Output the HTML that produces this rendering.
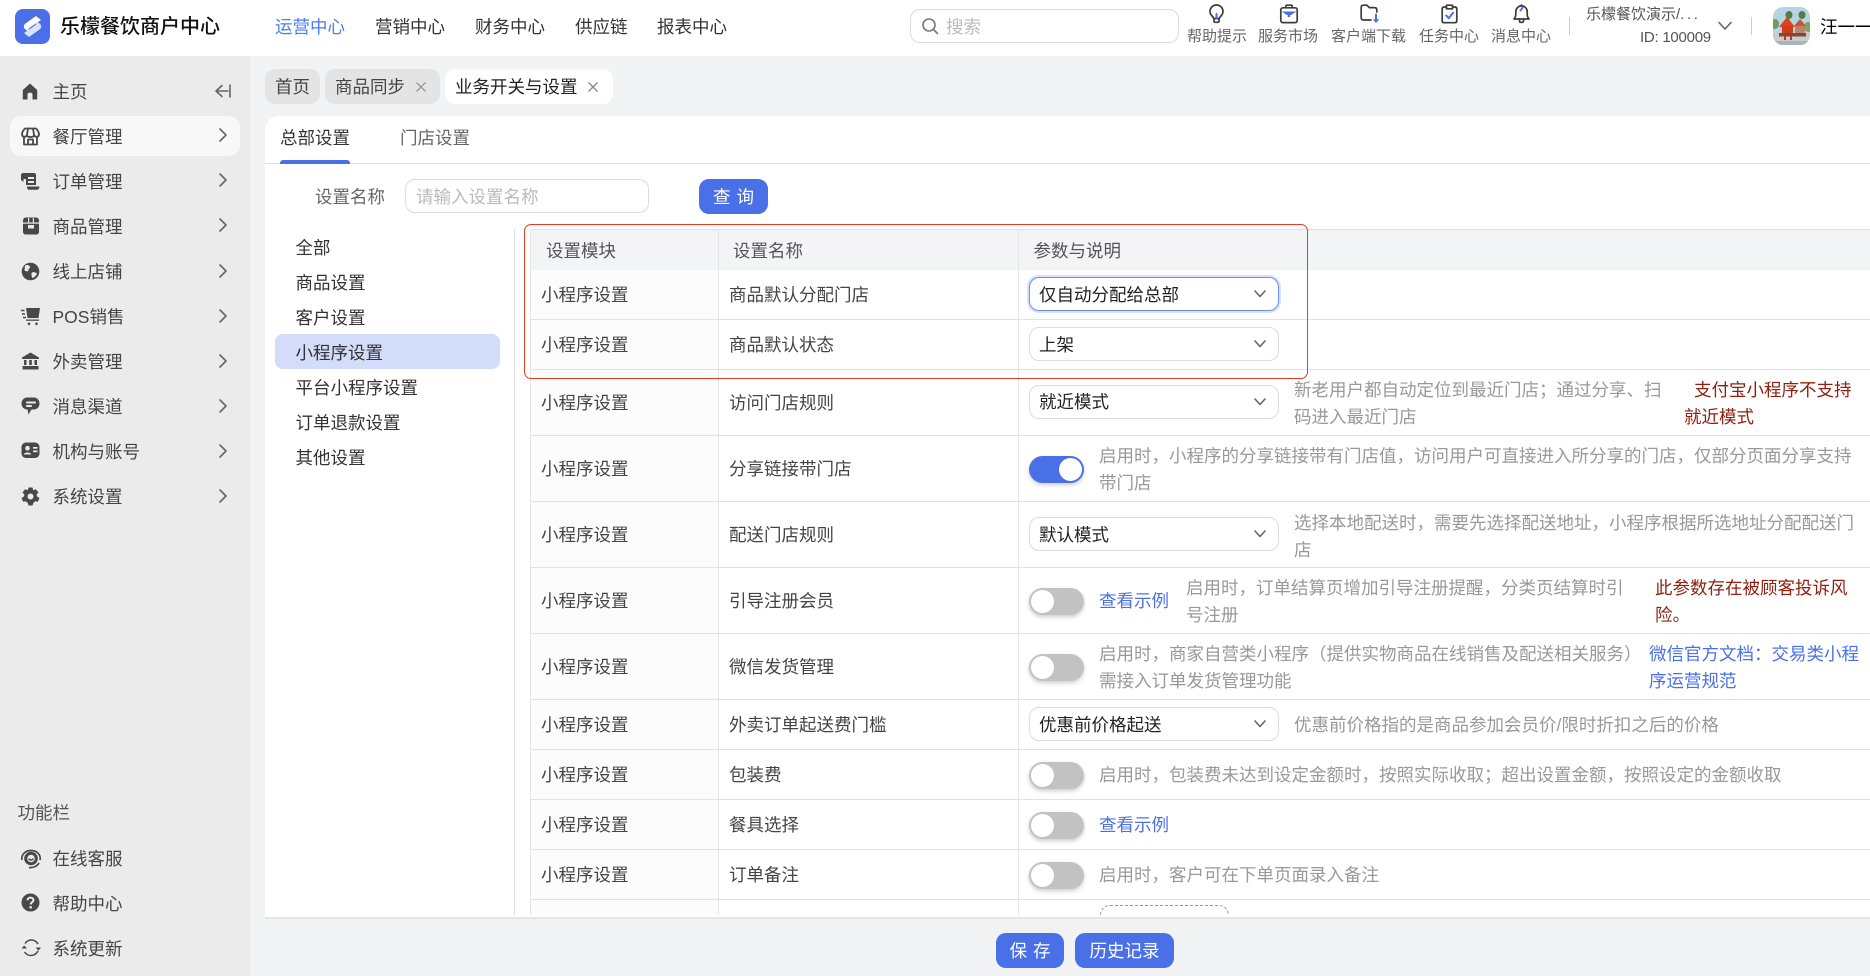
<!DOCTYPE html>
<html lang="zh-CN">
<head>
<meta charset="utf-8">
<title>业务开关与设置</title>
<style>
*{box-sizing:border-box;margin:0;padding:0}
html,body{width:1870px;height:976px;overflow:hidden;background:#f2f3f5}
body{position:relative;font-family:"Liberation Sans","Noto Sans CJK SC",sans-serif;font-size:17.5px;color:#333}
.a{position:absolute}
.t{position:absolute;white-space:nowrap;line-height:26px;height:26px}
svg{position:absolute;display:block}
.c1{color:#444}
.g{color:#999}
.r{color:#8f1f0e}
.b{color:#4a70e8}
.s{position:absolute;left:1029px;width:250px;height:34px;background:#fff;border:1px solid #dcdcdc;border-radius:10px;color:#222;line-height:34px;padding-left:9px;white-space:nowrap}
.s svg{right:11px;top:10px}
.sw{position:absolute;left:1029px;width:55px;height:27px;border-radius:14px;background:#c2c2c2;box-shadow:0 2px 4px rgba(0,0,0,.2)}
.sw i{position:absolute;left:2px;top:2px;width:23px;height:23px;border-radius:50%;background:#fff}
.sw.on{background:#4a70e8}
.sw.on i{left:30px}
.hl{position:absolute;left:530px;width:1340px;height:1px;background:#e2e2e2}
.nav{font-size:17.5px;color:#333}
.ic{font-size:15px;color:#666}
.menu{color:#444}
.ch{fill:none;stroke:#666;stroke-width:1.6;stroke-linecap:round;stroke-linejoin:round}
.top{fill:none;stroke:#3c3c3c;stroke-width:1.7;stroke-linecap:round;stroke-linejoin:round}
.acc{fill:none;stroke:#4a70e8;stroke-width:2;stroke-linecap:round;stroke-linejoin:round}
.sb{fill:#484848}
.tab{position:absolute;top:69px;height:35px;border-radius:10px;line-height:36px;background:#e4e4e4;color:#444;white-space:nowrap}
.btn{position:absolute;background:#4a70e8;color:#fff;border-radius:10px;text-align:center;white-space:nowrap}
</style>
</head>
<body>
<!-- top bar -->
<div class="a" style="left:0;top:0;width:1870px;height:56px;background:#fff"></div>
<svg style="left:15px;top:9px" width="35" height="35" viewBox="0 0 35 35">
<rect width="35" height="35" rx="8" fill="#4a6fe8"/>
<path d="M21 7 L26 11 L15 18.500 C13 20 13 21.500 14 23 L10.500 20.500 C8 18.500 8.500 16 10.500 14.500Z" fill="#fff"/>
<path d="M14 28 L9 24 L20 16.500 C22 15 22 13.500 21 12 L24.500 14.500 C27 16.500 26.500 19 24.500 20.500Z" fill="#dbe3fb"/>
</svg>
<div class="t" style="left:60px;top:14px;font-size:20px;font-weight:500;color:#111">乐檬餐饮商户中心</div>
<div class="t nav" style="left:275px;top:14px;color:#4a7df0">运营中心</div>
<div class="t nav" style="left:375px;top:14px">营销中心</div>
<div class="t nav" style="left:475px;top:14px">财务中心</div>
<div class="t nav" style="left:575px;top:14px">供应链</div>
<div class="t nav" style="left:657px;top:14px">报表中心</div>

<div class="a" style="left:910px;top:9px;width:269px;height:34px;border:1px solid #dcdcdc;border-radius:10px;background:#fff"></div>
<svg style="left:921px;top:17px" width="18" height="18" viewBox="0 0 18 18"><circle cx="8" cy="8" r="6" fill="none" stroke="#777" stroke-width="1.6"/><path d="M12.5 12.5L16.5 16.5" stroke="#777" stroke-width="1.6" stroke-linecap="round"/></svg>
<div class="t" style="left:946px;top:14px;color:#bbb">搜索</div>

<!-- top icons -->
<svg style="left:1207px;top:4px" width="19" height="20" viewBox="0 0 19 20"><path class="top" d="M6.7 14.5C6.6 12.6 3 11.5 3 7.5A6.5 6.5 0 0 1 16 7.5C16 11.5 12.4 12.6 12.3 14.5ZM7 14.5V17.5C7 18.6 12 18.6 12 17.5V14.5"/><path class="acc" d="M9.5 10V14" stroke-width="1.4"/></svg>
<svg style="left:1279px;top:4px" width="20" height="20" viewBox="0 0 20 20"><path class="top" d="M6.8 3.6V2.2C6.8 1.6 7.2 1.2 7.8 1.2H12.2C12.8 1.2 13.2 1.6 13.2 2.2V3.6M4 3.8H16C17.4 3.8 18.2 4.6 18.2 6V16C18.2 17.6 17.4 18.6 16 18.6H4C2.6 18.6 1.8 17.6 1.8 16V6C1.8 4.6 2.6 3.8 4 3.8Z"/><path d="M2.5 7.5H17.5L12 11H11.2V13H8.8V11H8Z" fill="#4a70e8"/></svg>
<svg style="left:1360px;top:4px" width="21" height="20" viewBox="0 0 21 20"><path class="top" d="M11 16H3.5C2 16 1.2 15.2 1.2 13.7V3.5C1.2 2 2 1.2 3.5 1.2H7L9.2 3.6H14.5C16 3.6 16.8 4.4 16.8 5.9V8"/><path class="acc" d="M16 10.5V17" stroke-width="2"/><path d="M12.8 15.3H19.2L16 19Z" fill="#4a70e8"/></svg>
<svg style="left:1441px;top:4px" width="17" height="20" viewBox="0 0 17 20"><path class="top" d="M5 3H3.2C2 3 1.2 3.8 1.2 5V16.6C1.2 17.9 2 18.7 3.2 18.7H13.8C15 18.7 15.8 17.9 15.8 16.6V5C15.8 3.8 15 3 13.8 3H12M5.5 1.2H11.5V4.8H5.5Z"/><path class="acc" d="M5.2 11.5L7.8 14.2L12 8.8"/></svg>
<svg style="left:1512px;top:4px" width="19" height="20" viewBox="0 0 19 20"><path class="top" d="M2 15C3.4 13.6 3.8 12 3.8 10V7.6A5.7 5.7 0 0 1 15.2 7.6V10C15.2 12 15.6 13.6 17 15Z"/><path class="top" d="M7.5 15.5V17.2C7.5 18.8 11.5 18.8 11.5 17.2V15.5M9.5 1V2"/><path class="acc" d="M8.5 6.5L10.5 3.8" stroke-width="1.7"/></svg>

<div class="t ic" style="left:1187px;top:24px">帮助提示</div>
<div class="t ic" style="left:1258px;top:24px">服务市场</div>
<div class="t ic" style="left:1331px;top:24px">客户端下载</div>
<div class="t ic" style="left:1419px;top:24px">任务中心</div>
<div class="t ic" style="left:1491px;top:24px">消息中心</div>

<div class="a" style="left:1569px;top:17px;width:1px;height:18px;background:#ccc"></div>
<div class="t" style="left:1586px;top:2px;font-size:15px;color:#555">乐檬餐饮演示/<span style="letter-spacing:2.6px">...</span></div>
<div class="t" style="left:1640px;top:25px;font-size:15px;color:#555;letter-spacing:-.25px">ID: 100009</div>
<svg style="left:1717px;top:20px" width="16" height="12" viewBox="0 0 16 12"><path class="ch" d="M2 2.5L8 9L14 2.5"/></svg>
<div class="a" style="left:1751px;top:17px;width:1px;height:18px;background:#ccc"></div>

<svg style="left:1773px;top:7px" width="37" height="38" viewBox="0 0 37 38">
<defs><clipPath id="av"><rect width="37" height="38" rx="10"/></clipPath></defs>
<g clip-path="url(#av)">
<rect width="37" height="38" fill="#b8d4e2"/>
<ellipse cx="16" cy="8" rx="3.500" ry="4" fill="#4f7f4a"/><ellipse cx="29" cy="8" rx="3.500" ry="4" fill="#4f7f4a"/>
<ellipse cx="2" cy="17" rx="4" ry="5" fill="#6e9a5c"/><ellipse cx="35" cy="20" rx="4" ry="5" fill="#7ea36a"/>
<rect y="26" width="37" height="12" fill="#c9cdc9"/>
<path d="M6 20L14 10L22 20Z" fill="#e2401a"/>
<path d="M21 19L27 12L33 19Z" fill="#c8533a"/>
<rect x="9" y="19" width="11" height="9" fill="#d23a1a"/>
<rect x="6" y="26" width="27" height="3.500" fill="#7d4a36"/>
<rect x="22" y="19" width="10" height="7" fill="#b8876a"/>
<rect x="11" y="29" width="2" height="4" fill="#c9341a"/><rect x="17" y="29" width="2" height="4" fill="#c9341a"/>
<rect x="0" y="34" width="37" height="4" fill="#a6b5bb"/>
</g></svg>
<div style="position:absolute;left:1820px;top:14px;width:50px;height:26px;overflow:hidden;white-space:nowrap;line-height:26px;color:#000">汪一一一一</div>

<!-- sidebar -->
<div class="a" style="left:0;top:56px;width:250px;height:920px;background:#ebebeb"></div>
<div class="a" style="left:10px;top:116px;width:230px;height:40px;background:#f8f8f8;border-radius:11px"></div>

<svg style="left:20px;top:81px" width="20" height="20" viewBox="0 0 20 20"><path class="sb" d="M10 2.500L2.800 9V18.500H7.500V13.500C7.500 11 12.500 11 12.500 13.500V18.500H17.200V9Z"/></svg>
<svg style="left:21px;top:127px" width="19" height="19" viewBox="0 0 19 19"><path d="M4 1.500H15C16.500 3 18 5.500 18 7.500 18 10 14.500 10.500 13.200 8.500 12 10.500 7 10.500 5.800 8.500 4.500 10.500 1 10 1 7.500 1 5.500 2.500 3 4 1.500ZM3 10V17.500H16V10M7 17.500V12.500H12V17.500M7 2L5.800 8.500M12 2L13.200 8.500" fill="none" stroke="#484848" stroke-width="1.800" stroke-linejoin="round"/></svg>
<svg style="left:20px;top:172px" width="21" height="19" viewBox="0 0 21 19"><path class="sb" d="M3 1H14C15.500 1 16 2 16 3V13H6V7H3.500V10L1 8V3C1 2 2 1 3 1ZM8 5V7H14V5ZM8 9V11H14V9Z" fill-rule="evenodd"/><path class="sb" d="M7 14.500H19.500C19.500 16 18.500 17.800 17 17.800H9C7.500 17.800 7 16 7 14.500Z"/></svg>
<svg style="left:22px;top:217px" width="18" height="18" viewBox="0 0 18 18"><path class="sb" d="M4 0.500H14C16 0.500 17 2 17 3.500V14.500C17 16.500 16 17.500 14 17.500H4C2 17.500 1 16.500 1 14.500V3.500C1 2 2 0.500 4 0.500ZM6 8V11.500H12V8Z" fill-rule="evenodd"/><rect x="1" y="5.500" width="16" height="1.200" fill="#ebebeb"/><rect x="6" y="1" width="1.200" height="5" fill="#ebebeb"/><rect x="10.800" y="1" width="1.200" height="5" fill="#ebebeb"/></svg>
<svg style="left:21px;top:262px" width="19" height="19" viewBox="0 0 19 19"><circle cx="9.500" cy="9.500" r="8.800" fill="#484848"/><path d="M4 3.500C6 2.500 8 3 9 4.500 9.500 6 7.500 6.500 7.500 8 7.500 10 5 9.500 3.500 8.500ZM11 10.500C12.500 9.500 15 10.500 16 11.500 15 14 13 15.500 11.500 16 10.500 14.500 10 12 11 10.500Z" fill="#ebebeb"/></svg>
<svg style="left:20px;top:307px" width="21" height="19" viewBox="0 0 21 19"><path class="sb" d="M6 1H20L18.500 11H7.500Z"/><path d="M1 3.500H4.500M2 7H5M3 10.500H6" stroke="#484848" stroke-width="1.600"/><rect x="6" y="12.500" width="13" height="1.300" fill="#484848"/><circle cx="9" cy="16.800" r="1.300" fill="#484848"/><circle cx="16.500" cy="16.800" r="1.300" fill="#484848"/></svg>
<svg style="left:21px;top:352px" width="19" height="18" viewBox="0 0 19 18"><path class="sb" d="M9.500 0.500L18 5.500V7H1V5.500ZM3 8H5.500V13H3ZM8.200 8H10.800V13H8.200ZM13.500 8H16V13H13.500ZM1.500 14H17.500V17.500H1.500Z"/></svg>
<svg style="left:21px;top:397px" width="19" height="18" viewBox="0 0 19 18"><path class="sb" d="M6 0.500H13C16 0.500 18.500 3 18.500 6.500S16 12.500 13 12.500H10.500L7.500 17.500 6.500 12.500C3 12.500 0.500 10 0.500 6.500S3 0.500 6 0.500Z"/><rect x="5" y="4.500" width="10" height="2" rx="1" fill="#ebebeb"/><rect x="5" y="8" width="6" height="2" rx="1" fill="#ebebeb"/></svg>
<svg style="left:21px;top:442px" width="19" height="17" viewBox="0 0 19 17"><rect x="0.500" y="0.500" width="18" height="15.500" rx="4.500" fill="#484848"/><circle cx="6.500" cy="6.200" r="2.300" fill="#ebebeb"/><path d="M2.800 12.500C3.500 9.800 9.500 9.800 10.200 12.500Z" fill="#ebebeb"/><rect x="12" y="5" width="4.500" height="1.700" fill="#ebebeb"/><rect x="12" y="8.500" width="4.500" height="1.700" fill="#ebebeb"/></svg>
<svg style="left:21px;top:487px" width="19" height="19" viewBox="0 0 19 19"><path class="sb" d="M7.500 0.500H11.500L12.200 3.300 14.800 2.200 17.500 5.500 15.600 7.600 16 9.500 18.500 11 16.800 14.800 14.200 14.200 12.400 16 11.500 18.500H7.500L6.800 16 4.600 14.200 2.200 14.800 0.500 11 3 9.500 3.400 7.600 1.500 5.500 4.200 2.200 6.800 3.300ZM9.500 6.500A3 3 0 1 0 9.500 12.500 3 3 0 0 0 9.500 6.500Z" fill-rule="evenodd"/></svg>

<div class="t menu" style="left:52.500px;top:79px">主页</div>
<svg style="left:214px;top:83px" width="18" height="16" viewBox="0 0 18 16"><path d="M8 2.500L2 8L8 13.500M2.500 8H14M16 2V14" fill="none" stroke="#666" stroke-width="1.600" stroke-linecap="round" stroke-linejoin="round"/></svg>
<div class="t menu" style="left:52.500px;top:124px">餐厅管理</div>
<div class="t menu" style="left:52.500px;top:169px">订单管理</div>
<div class="t menu" style="left:52.500px;top:214px">商品管理</div>
<div class="t menu" style="left:52.500px;top:259px">线上店铺</div>
<div class="t menu" style="left:52.500px;top:304px">POS销售</div>
<div class="t menu" style="left:52.500px;top:349px">外卖管理</div>
<div class="t menu" style="left:52.500px;top:394px">消息渠道</div>
<div class="t menu" style="left:52.500px;top:439px">机构与账号</div>
<div class="t menu" style="left:52.500px;top:484px">系统设置</div>

<svg style="left:218px;top:127px" width="10" height="16" viewBox="0 0 10 16"><path class="ch" d="M2 2L8 8L2 14"/></svg>
<svg style="left:218px;top:172px" width="10" height="16" viewBox="0 0 10 16"><path class="ch" d="M2 2L8 8L2 14"/></svg>
<svg style="left:218px;top:217px" width="10" height="16" viewBox="0 0 10 16"><path class="ch" d="M2 2L8 8L2 14"/></svg>
<svg style="left:218px;top:263px" width="10" height="16" viewBox="0 0 10 16"><path class="ch" d="M2 2L8 8L2 14"/></svg>
<svg style="left:218px;top:308px" width="10" height="16" viewBox="0 0 10 16"><path class="ch" d="M2 2L8 8L2 14"/></svg>
<svg style="left:218px;top:353px" width="10" height="16" viewBox="0 0 10 16"><path class="ch" d="M2 2L8 8L2 14"/></svg>
<svg style="left:218px;top:398px" width="10" height="16" viewBox="0 0 10 16"><path class="ch" d="M2 2L8 8L2 14"/></svg>
<svg style="left:218px;top:443px" width="10" height="16" viewBox="0 0 10 16"><path class="ch" d="M2 2L8 8L2 14"/></svg>
<svg style="left:218px;top:488px" width="10" height="16" viewBox="0 0 10 16"><path class="ch" d="M2 2L8 8L2 14"/></svg>

<div class="t" style="left:17.500px;top:800px;color:#555">功能栏</div>
<div class="t menu" style="left:52.500px;top:846px">在线客服</div>
<div class="t menu" style="left:52.500px;top:891px">帮助中心</div>
<div class="t menu" style="left:52.500px;top:936px">系统更新</div>
<svg style="left:20px;top:848px" width="22" height="22" viewBox="0 0 22 22"><circle cx="11" cy="10.500" r="6.800" fill="#484848"/><circle cx="11" cy="10.500" r="3.800" fill="#ebebeb"/><path d="M8.800 10.500C9.500 12.500 12.500 12.500 13.200 10.500" fill="none" stroke="#484848" stroke-width="1.400"/><path d="M2 12C1 8 4 2.500 11 2.500S21 8 20 12M9 19.500C13 20 17 18.500 19 15" fill="none" stroke="#484848" stroke-width="1.700"/></svg>
<svg style="left:21px;top:893px" width="19" height="19" viewBox="0 0 19 19"><circle cx="9.500" cy="9.500" r="9" fill="#484848"/><path d="M6.500 7.200C6.500 3.800 12.500 3.800 12.500 7.200 12.500 9.200 9.700 9.200 9.700 11.500" fill="none" stroke="#ebebeb" stroke-width="2"/><circle cx="9.700" cy="14.300" r="1.300" fill="#ebebeb"/></svg>
<svg style="left:20px;top:938px" width="22" height="20" viewBox="0 0 22 20"><path d="M5 5.500C8.500 0.500 15 1 18 6M18 13C15 18.500 8 19 4.500 14" fill="none" stroke="#484848" stroke-width="1.500"/><path d="M15.800 9.500H21L18.400 12.800ZM1.500 10.500H7L4.200 7.500Z" fill="#484848"/></svg>

<!-- tabs -->
<div class="tab" style="left:265px;width:55px;padding-left:10px">首页</div>
<div class="tab" style="left:325px;width:115px;padding-left:10px">商品同步</div>
<div class="tab" style="left:445px;width:168px;padding-left:10px;background:#fff;color:#222">业务开关与设置</div>
<svg style="left:415px;top:81px" width="12" height="12" viewBox="0 0 12 12"><path d="M1.500 1.500L10.500 10.500M10.500 1.500L1.500 10.500" stroke="#999" stroke-width="1.300"/></svg>
<svg style="left:587px;top:81px" width="12" height="12" viewBox="0 0 12 12"><path d="M1.500 1.500L10.500 10.500M10.500 1.500L1.500 10.500" stroke="#888" stroke-width="1.300"/></svg>

<!-- main panel -->
<div class="a" style="left:265px;top:116px;width:1605px;height:802px;background:#fff;border-top-left-radius:14px"></div>
<div class="t" style="left:280px;top:125px;color:#333">总部设置</div>
<div class="t" style="left:400px;top:125px;color:#666">门店设置</div>
<div class="a" style="left:265px;top:163px;width:1605px;height:1px;background:#dfdfdf"></div>
<div class="a" style="left:280px;top:160px;width:70px;height:4px;background:#4a70e8;border-radius:3px 3px 0 0"></div>

<div class="t" style="left:315px;top:184px;color:#666">设置名称</div>
<div class="a" style="left:405px;top:179px;width:244px;height:34px;border:1px solid #dcdcdc;border-radius:10px;background:#fff"></div>
<div class="t" style="left:416px;top:184px;color:#bbb">请输入设置名称</div>
<div class="btn" style="left:699px;top:179px;width:69px;height:35px;line-height:36px;letter-spacing:6px;padding-left:6px">查询</div>

<div class="a" style="left:275px;top:334px;width:225px;height:35px;background:#d3dcf9;border-radius:8px"></div>
<div class="t" style="left:295.500px;top:235px">全部</div>
<div class="t" style="left:295.500px;top:270px">商品设置</div>
<div class="t" style="left:295.500px;top:305px">客户设置</div>
<div class="t" style="left:295.500px;top:340px">小程序设置</div>
<div class="t" style="left:295.500px;top:375px">平台小程序设置</div>
<div class="t" style="left:295.500px;top:410px">订单退款设置</div>
<div class="t" style="left:295.500px;top:445px">其他设置</div>
<div class="a" style="left:514px;top:229px;width:1px;height:686px;background:#e0e0e0"></div>

<!-- table -->
<div class="a" style="left:530px;top:229px;width:1340px;height:41px;background:#f3f4f6;border-top-left-radius:6px"></div>
<div class="a" style="left:530px;top:270px;width:188px;height:645px;background:#fcfcfc"></div>
<div class="a" style="left:530px;top:229px;width:1340px;height:1px;background:#dfe0e2"></div>
<div class="a" style="left:530px;top:229px;width:1px;height:686px;background:#e6e6e6"></div>
<div class="a" style="left:718px;top:229px;width:1px;height:686px;background:#e6e6e6"></div>
<div class="a" style="left:1018px;top:229px;width:1px;height:686px;background:#e6e6e6"></div>
<div class="hl" style="top:319px"></div>
<div class="hl" style="top:369px"></div>
<div class="hl" style="top:435px"></div>
<div class="hl" style="top:501px"></div>
<div class="hl" style="top:567px"></div>
<div class="hl" style="top:633px"></div>
<div class="hl" style="top:699px"></div>
<div class="hl" style="top:749px"></div>
<div class="hl" style="top:799px"></div>
<div class="hl" style="top:849px"></div>
<div class="hl" style="top:899px"></div>

<div class="t" style="left:546px;top:238px;color:#555">设置模块</div>
<div class="t" style="left:733px;top:238px;color:#555">设置名称</div>
<div class="t" style="left:1033.500px;top:238px;color:#555">参数与说明</div>

<div class="t c1" style="left:541px;top:282px">小程序设置</div><div class="t c1" style="left:729px;top:282px">商品默认分配门店</div>
<div class="t c1" style="left:541px;top:332px">小程序设置</div><div class="t c1" style="left:729px;top:332px">商品默认状态</div>
<div class="t c1" style="left:541px;top:390px">小程序设置</div><div class="t c1" style="left:729px;top:390px">访问门店规则</div>
<div class="t c1" style="left:541px;top:456px">小程序设置</div><div class="t c1" style="left:729px;top:456px">分享链接带门店</div>
<div class="t c1" style="left:541px;top:522px">小程序设置</div><div class="t c1" style="left:729px;top:522px">配送门店规则</div>
<div class="t c1" style="left:541px;top:588px">小程序设置</div><div class="t c1" style="left:729px;top:588px">引导注册会员</div>
<div class="t c1" style="left:541px;top:654px">小程序设置</div><div class="t c1" style="left:729px;top:654px">微信发货管理</div>
<div class="t c1" style="left:541px;top:712px">小程序设置</div><div class="t c1" style="left:729px;top:712px">外卖订单起送费门槛</div>
<div class="t c1" style="left:541px;top:762px">小程序设置</div><div class="t c1" style="left:729px;top:762px">包装费</div>
<div class="t c1" style="left:541px;top:812px">小程序设置</div><div class="t c1" style="left:729px;top:812px">餐具选择</div>
<div class="t c1" style="left:541px;top:862px">小程序设置</div><div class="t c1" style="left:729px;top:862px">订单备注</div>

<!-- controls -->
<div class="s" style="top:277px;border-color:#6f8fef;box-shadow:0 0 0 2px #d8e1fb">仅自动分配给总部<svg width="14" height="12" viewBox="0 0 14 12"><path class="ch" d="M2 3L7 8.500L12 3" stroke="#444"/></svg></div>
<div class="s" style="top:327px">上架<svg width="14" height="12" viewBox="0 0 14 12"><path class="ch" d="M2 3L7 8.500L12 3" stroke="#444"/></svg></div>
<div class="s" style="top:385px;line-height:32px">就近模式<svg width="14" height="12" viewBox="0 0 14 12"><path class="ch" d="M2 3L7 8.500L12 3" stroke="#444"/></svg></div>
<div class="t g" style="left:1294px;top:377px">新老用户都自动定位到最近门店；通过分享、扫</div>
<div class="t g" style="left:1294px;top:404px">码进入最近门店</div>
<div class="t r" style="left:1694px;top:377px">支付宝小程序不支持</div>
<div class="t r" style="left:1684px;top:404px">就近模式</div>

<div class="sw on" style="top:456px"><i></i></div>
<div class="t g" style="left:1099px;top:443px">启用时，小程序的分享链接带有门店值，访问用户可直接进入所分享的门店，仅部分页面分享支持</div>
<div class="t g" style="left:1099px;top:470px">带门店</div>

<div class="s" style="top:517px">默认模式<svg width="14" height="12" viewBox="0 0 14 12"><path class="ch" d="M2 3L7 8.500L12 3" stroke="#444"/></svg></div>
<div class="t g" style="left:1294px;top:510px">选择本地配送时，需要先选择配送地址，小程序根据所选地址分配配送门</div>
<div class="t g" style="left:1294px;top:537px">店</div>

<div class="sw" style="top:588px"><i></i></div>
<div class="t b" style="left:1099px;top:588px">查看示例</div>
<div class="t g" style="left:1186px;top:575px">启用时，订单结算页增加引导注册提醒，分类页结算时引</div>
<div class="t g" style="left:1186px;top:602px">号注册</div>
<div class="t r" style="left:1655px;top:575px">此参数存在被顾客投诉风</div>
<div class="t r" style="left:1655px;top:602px">险。</div>

<div class="sw" style="top:654px"><i></i></div>
<div class="t g" style="left:1099px;top:641px">启用时，商家自营类小程序（提供实物商品在线销售及配送相关服务）</div>
<div class="t g" style="left:1099px;top:668px">需接入订单发货管理功能</div>
<div class="t b" style="left:1649px;top:641px">微信官方文档：交易类小程</div>
<div class="t b" style="left:1649px;top:668px">序运营规范</div>

<div class="s" style="top:707px">优惠前价格起送<svg width="14" height="12" viewBox="0 0 14 12"><path class="ch" d="M2 3L7 8.500L12 3" stroke="#444"/></svg></div>
<div class="t g" style="left:1294px;top:712px">优惠前价格指的是商品参加会员价/限时折扣之后的价格</div>

<div class="sw" style="top:762px"><i></i></div>
<div class="t g" style="left:1099px;top:762px">启用时，包装费未达到设定金额时，按照实际收取；超出设置金额，按照设定的金额收取</div>

<div class="sw" style="top:812px"><i></i></div>
<div class="t b" style="left:1099px;top:812px">查看示例</div>

<div class="sw" style="top:862px"><i></i></div>
<div class="t g" style="left:1099px;top:862px">启用时，客户可在下单页面录入备注</div>

<div class="a" style="left:1100px;top:905px;width:129px;height:30px;border:1px dashed #999;border-radius:10px"></div>

<!-- footer -->
<div class="a" style="left:265px;top:915px;width:1605px;height:61px;background:#f1f2f3;border-top:3px solid #fff"></div>
<div class="a" style="left:265px;top:917px;width:1605px;height:2px;background:#e6e6e6"></div>
<div class="btn" style="left:996px;top:933px;width:68px;height:35px;line-height:36px;letter-spacing:6px;padding-left:6px">保存</div>
<div class="btn" style="left:1075px;top:933px;width:99px;height:35px;line-height:36px">历史记录</div>

<!-- red annotation -->
<div class="a" style="left:524px;top:224px;width:784px;height:155px;border:1.500px solid #e63a24;border-radius:7px"></div>
</body>
</html>
